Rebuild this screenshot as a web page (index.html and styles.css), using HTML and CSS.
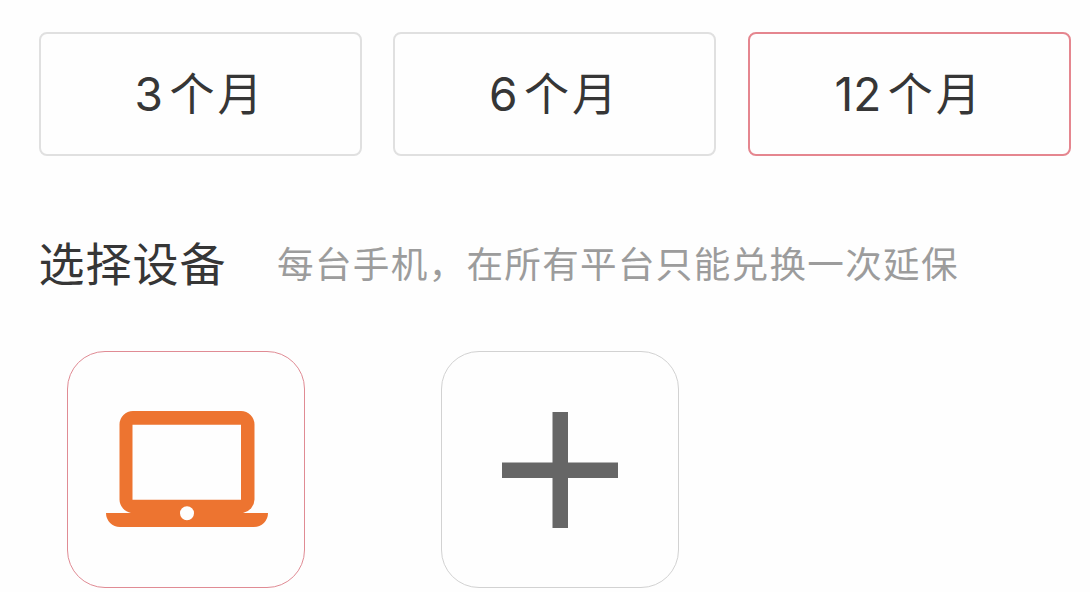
FILE: index.html
```html
<!DOCTYPE html>
<html lang="zh-CN">
<head>
<meta charset="utf-8">
<title>选择设备</title>
<link rel="stylesheet" href="styles.css">
</head>
<body>
<main class="page">
  <div class="terms">
    <div class="term"><span class="num">3</span><span class="unit">个月</span></div>
    <div class="term"><span class="num">6</span><span class="unit">个月</span></div>
    <div class="term term-active"><span class="num">12</span><span class="unit">个月</span></div>
  </div>
  <div class="heading">
    <h2 class="title">选择设备</h2>
    <p class="hint">每台手机，在所有平台只能兑换一次延保</p>
  </div>
  <div class="devices">
    <div class="device device-active">
      <svg class="laptop" viewBox="0 0 162 116" width="162" height="116">
        <path fill="#ed7430" fill-rule="evenodd" d="M27 0H135A13.500 13.500 0 0 1 148.500 13.500V88.500A14 14 0 0 1 137 102H162A14 14 0 0 1 148 116H14A14 14 0 0 1 0 102H25A14 14 0 0 1 13.500 88.500V13.500A13.500 13.500 0 0 1 27 0ZM26.500 13.700V88.700H135V13.700ZM81 95.300A7 7 0 1 0 81 109.300A7 7 0 1 0 81 95.300Z"/>
      </svg>
    </div>
    <div class="device">
      <svg class="plus" viewBox="0 0 116 116" width="116" height="116">
        <path fill="#666" d="M50.500 0H66V50.500H116V66H66V116H50.500V66H0V50.500H50.500Z"/>
      </svg>
    </div>
  </div>
</main>
</body>
</html>
```
FILE: styles.css
```css
* { box-sizing: border-box; }
body {
  margin: 0;
  background: #fefefe;
  color: #363636;
  font-family: "Noto Sans CJK SC", sans-serif;
}
.page {
  height: 592px;
  overflow: hidden;
  padding: 32px 19px 0 38.5px;
}
.terms {
  display: grid;
  grid-template-columns: repeat(3, 323px);
  column-gap: 31.6px;
}
.term {
  height: 123.5px;
  border: 2px solid #e0e0e0;
  border-radius: 8px;
  display: flex;
  align-items: center;
  justify-content: center;
  line-height: 66px;
  white-space: nowrap;
}
.num {
  font-family: Inter, sans-serif;
  font-size: 46px;
  margin-right: 6.5px;
}
.unit {
  font-size: 45px;
  letter-spacing: 3px;
  padding-bottom: 3px;
}
.term-active { border-color: #e5868f; }
.heading {
  display: flex;
  align-items: center;
  height: 68px;
  margin-top: 71.500px;
}
.title {
  margin: 0;
  font-size: 46px;
  font-weight: 400;
  letter-spacing: 1px;
  line-height: 66px;
}
.hint {
  margin: 4px 0 0 50.5px;
  font-size: 36.6px;
  font-weight: 400;
  letter-spacing: 1.3px;
  line-height: 54px;
  color: #9c9c9c;
  white-space: nowrap;
}
.devices {
  display: flex;
  gap: 136px;
  margin: 56px 0 0 28.5px;
}
.device {
  width: 238px;
  height: 237px;
  border: 1px solid #d2d2d2;
  border-radius: 38px;
  display: flex;
  align-items: center;
  justify-content: center;
}
.device-active { border-color: #e08b94; }
.laptop, .plus { display: block; }
.laptop { margin: 0 0 1.5px 1.2px; }
```
